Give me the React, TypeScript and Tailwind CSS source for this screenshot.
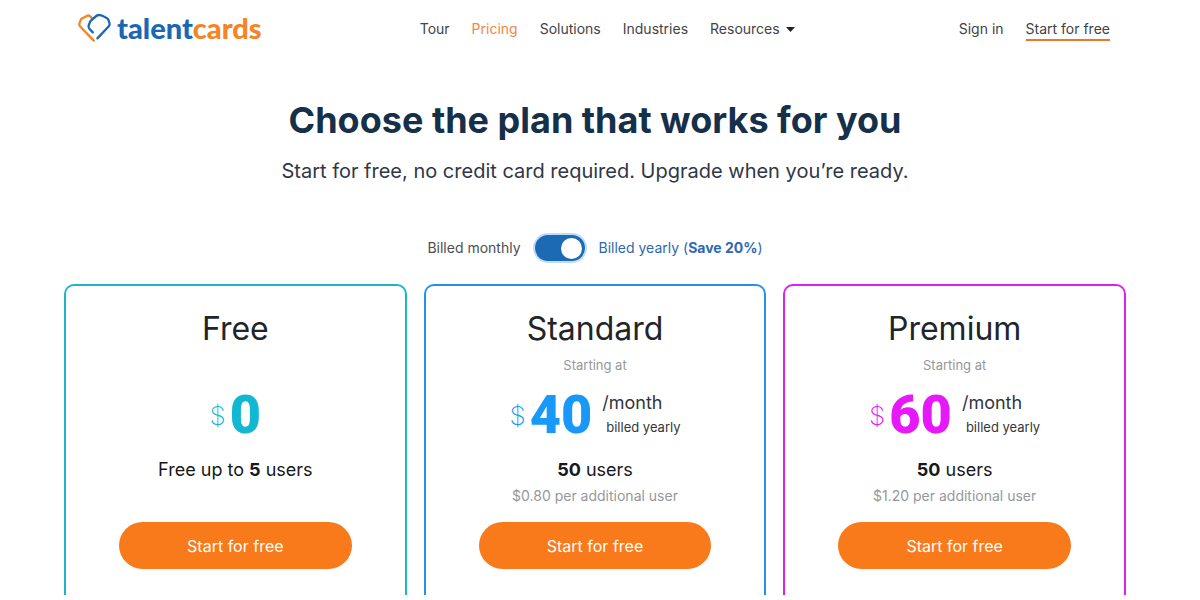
import { useState } from 'react';
import clsx from 'clsx';

interface Plan {
  id: string;
  name: string;
  price: number;
  extra?: string;
  border: string;
  text: string;
}

const plans: Plan[] = [
  {
    id: 'free',
    name: 'Free',
    price: 0,
    border: 'border-[#1fb5c9]',
    text: 'text-[#12b8d2]',
  },
  {
    id: 'standard',
    name: 'Standard',
    price: 40,
    extra: '$0.80 per additional user',
    border: 'border-[#2492ea]',
    text: 'text-[#1899fa]',
  },
  {
    id: 'premium',
    name: 'Premium',
    price: 60,
    extra: '$1.20 per additional user',
    border: 'border-[#dc20ee]',
    text: 'text-[#e619fb]',
  },
];

const navItems = ['Tour', 'Pricing', 'Solutions', 'Industries'];

function Logo() {
  return (
    <a href="#home" className="flex items-center gap-[5px] pb-[2px]">
      <svg width="34" height="30" viewBox="0 0 34 30" fill="none" strokeWidth="2.3" strokeLinecap="round">
        <path
          stroke="#f58426"
          d="M14.2 5.4 L11.9 3.2 Q10.5 2 8.8 2.9 L4 5.6 Q3.1 6.1 2.7 7.1 L1.5 10.3 Q0.9 12.1 2.2 13.5 L15.8 27.6"
        />
        <path
          stroke="#1c67b1"
          d="M14.8 19.4 L11.4 15.8 Q10 14.3 10.7 12.4 L12 9 Q12.4 8.1 13.2 7.3 L18.3 3 Q20 1.7 21.8 2.1 L24 2.6 L29 5.2 Q30 5.8 30.4 6.9 L31.5 10 Q32.1 11.9 30.8 13.3 L19.4 25.4"
        />
      </svg>
      <span className="font-['Lato',sans-serif] text-[29px] leading-8 font-black">
        <span className="text-[#1c67b1]">talent</span>
        <span className="text-[#f58426]">cards</span>
      </span>
    </a>
  );
}

function Header() {
  return (
    <header className="flex h-[58px] items-center justify-between pr-[80px] pl-[78px] text-sm text-[#3f4347]">
      <Logo />
      <nav className="mr-[6px] flex items-center gap-[22px]">
        {navItems.map((item) => (
          <a key={item} href={`#${item.toLowerCase()}`} className={clsx(item === 'Pricing' && 'text-[#f58642]')}>
            {item}
          </a>
        ))}
        <button type="button" className="flex items-center gap-[6px]">
          Resources
          <svg width="9" height="5" viewBox="0 0 9 5" fill="#212529">
            <path d="M0 0h9L4.5 5z" />
          </svg>
        </button>
      </nav>
      <div className="flex items-center gap-[22px]">
        <a href="#signin">Sign in</a>
        <a href="#signup" className="mt-0.5 border-b-2 border-[#e87a25]">
          Start for free
        </a>
      </div>
    </header>
  );
}

function PlanCard({ plan }: { plan: Plan }) {
  return (
    <section
      className={clsx('flex flex-col items-center rounded-t-[10px] border-2 border-b-0 px-[53px] pt-5 pb-[26px]', plan.border)}
    >
      <h2 className="text-[32px] leading-[46px] text-[#212529]">{plan.name}</h2>
      <p className="mt-[3px] h-5 text-[13px] leading-5 text-[#96989b]">{plan.price > 0 && 'Starting at'}</p>

      {/* Price */}
      <div className="mt-2 flex h-[64px] items-center">
        <span className={clsx('mr-1 text-[26px] font-extralight', plan.text)}>$</span>
        <span className={clsx("font-['Roboto',sans-serif] text-[54px] leading-[64px] font-black", plan.text)}>
          {plan.price}
        </span>
        {plan.price > 0 && (
          <div className="ml-[10px] text-[#333639]">
            <p className="text-lg leading-6">/month</p>
            <p className="pl-1 text-[13px] leading-6">billed yearly</p>
          </div>
        )}
      </div>

      {/* Users */}
      <p className="mt-[7px] text-lg leading-8 text-[#16181b]">
        {plan.price === 0 && 'Free up to '}
        <strong className="font-bold">{plan.price === 0 ? 5 : 50}</strong> users
      </p>
      <p className="h-5 text-sm leading-5 text-[#96989b]">{plan.extra}</p>

      <button type="button" className="mt-4 h-[47px] w-full rounded-full bg-[#f97a1a] text-base text-white">
        Start for free
      </button>
    </section>
  );
}

export default function App() {
  const [yearly, setYearly] = useState(true);

  return (
    <div className="bg-white pr-[10px] font-['Inter',sans-serif]">
      <Header />

      <main>
        <div className="pt-9 text-center">
          <h1 className="text-[36px] leading-[52px] font-bold text-[#16304a]">Choose the plan that works for you</h1>
          <p className="mt-[9px] text-xl leading-8 text-[#2f3747]">
            Start for free, no credit card required. Upgrade when you’re ready.
          </p>
        </div>

        {/* Billing period */}
        <label className="mt-12 flex items-center justify-center text-sm">
          <span className="text-[#4b4f54]">Billed monthly</span>
          <input
            type="checkbox"
            role="switch"
            checked={yearly}
            onChange={(e) => setYearly(e.target.checked)}
            className="peer sr-only"
          />
          <span className="mx-[14px] flex h-[26px] w-[50px] items-center justify-start rounded-full bg-gray-400 px-[3px] ring-2 ring-[#bfdcf8] peer-checked:justify-end peer-checked:bg-[#1c69b4]">
            <span className="size-[21px] rounded-full bg-white" />
          </span>
          <span className="text-[#2d68b2]">
            Billed yearly (<strong className="font-bold">Save 20%</strong>)
          </span>
        </label>

        <div className="mt-[23px] grid grid-cols-3 gap-[17px] px-16">
          {plans.map((plan) => (
            <PlanCard key={plan.id} plan={plan} />
          ))}
        </div>
      </main>
    </div>
  );
}
